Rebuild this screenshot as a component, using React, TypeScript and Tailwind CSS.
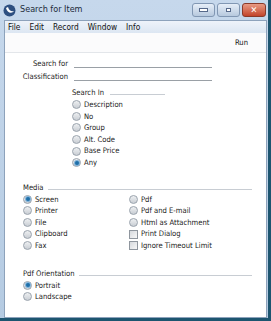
import React from 'react';

const font = { fontFamily: '"DejaVu Sans Condensed", "DejaVu Sans", sans-serif' };

function Radio({ checked }: { checked?: boolean }) {
  return (
    <span className="relative inline-block w-[9px] h-[9px] rounded-full border border-[#9aa3ad] bg-gradient-to-b from-[#eef0f2] to-[#c9ced4] shrink-0">
      {checked && (
        <span className="absolute left-[1.5px] top-[1.5px] w-[4px] h-[4px] rounded-full bg-[#1f6fa8] ring-1 ring-[#7fb3da]" />
      )}
    </span>
  );
}

function Check() {
  return <span className="inline-block w-[9px] h-[9px] border border-[#8f969e] bg-gradient-to-br from-[#d6d9dd] to-[#f7f7f7] shrink-0" />;
}

function Opt({ label, checked, box }: { label: string; checked?: boolean; box?: boolean }) {
  return (
    <div className="flex items-center gap-[3px] h-[11.6px]">
      {box ? <Check /> : <Radio checked={checked} />}
      <span className="text-[7.6px] text-[#1a1a1a] leading-none">{label}</span>
    </div>
  );
}

function Section({ title }: { title: string }) {
  return (
    <div className="flex items-center gap-[4px] h-[12px] pr-[14px]">
      <span className="text-[7.6px] text-[#1a1a1a] leading-none">{title}</span>
      <span className="flex-1 h-px bg-[#c8cdd3] mt-[3px]" />
    </div>
  );
}

export default function App() {
  const menu = ['File', 'Edit', 'Record', 'Window', 'Info'];
  return (
    <div style={font} className="w-[271px] h-[321px] flex flex-col bg-gradient-to-b from-[#c6d8ec] to-[#b5cbe2] border-r-[3px] border-b-[3px] border-[#1d5570] overflow-hidden">
      {/* title bar */}
      <div className="h-[20px] flex items-center pl-[3px] pr-[2px]">
        <svg width="13" height="13" viewBox="0 0 13 13">
          <circle cx="6.5" cy="6.5" r="6" fill="#2d4f80" />
          <path d="M3 4 C 4 9, 9 10, 11 7 C 9 8, 6 7, 5 3 Z" fill="#fff" />
        </svg>
        <span className="ml-[4px] text-[9px] text-[#1c2a3a]">Search for Item</span>
        <div className="ml-auto flex items-center gap-[2px]">
          <div className="w-[23px] h-[14px] rounded-[3px] border border-[#8197b3] bg-gradient-to-b from-[#e6eef8] to-[#b7c9de] flex items-center justify-center">
            <span className="w-[7px] h-[2px] bg-white border border-[#56698a] box-content" />
          </div>
          <div className="w-[23px] h-[14px] rounded-[3px] border border-[#8197b3] bg-gradient-to-b from-[#e6eef8] to-[#b7c9de] flex items-center justify-center">
            <span className="w-[5px] h-[4px] border border-[#56698a] bg-white" />
          </div>
          <div className="w-[24px] h-[14px] rounded-[3px] border border-[#8a3a2a] bg-gradient-to-b from-[#e89a84] to-[#c2432a] flex items-center justify-center text-white text-[9px] font-bold leading-none">
            ✕
          </div>
        </div>
      </div>
      {/* client */}
      <div className="flex-1 ml-[4px] mr-[1px] flex flex-col bg-white border border-[#8da2bb]">
        <div className="h-[12px] flex items-center gap-[9px] pl-[3px] bg-gradient-to-b from-[#eef3fa] to-[#dce6f2]">
          {menu.map((m) => (
            <span key={m} className="text-[8.3px] text-[#111] leading-none">{m}</span>
          ))}
        </div>
        <div className="h-[20px] flex items-center justify-end pr-[18px] border-b border-[#e3e6ea] bg-[#fbfbfc]">
          <span className="text-[7.6px] text-[#111]">Run</span>
        </div>
        <div className="flex-1 flex flex-col pt-[5px]">
          <div className="flex items-center h-[12px]">
            <span className="w-[63px] text-right text-[7.6px] text-[#1a1a1a] leading-none">Search for</span>
            <span className="ml-[6px] w-[138px] h-px bg-[#9aa0a6] mt-[6px]" />
          </div>
          <div className="flex items-center h-[12px] mt-[1px]">
            <span className="w-[63px] text-right text-[7.6px] text-[#1a1a1a] leading-none">Classification</span>
            <span className="ml-[6px] w-[138px] h-px bg-[#9aa0a6] mt-[6px]" />
          </div>
          <div className="ml-[67px] mt-[4px] flex flex-col">
            <div className="flex items-center gap-[6px] h-[12px]">
              <span className="text-[7.6px] text-[#1a1a1a] leading-none">Search In</span>
              <span className="w-[55px] h-px bg-[#c8cdd3] mt-[3px]" />
            </div>
            <Opt label="Description" />
            <Opt label="No" />
            <Opt label="Group" />
            <Opt label="Alt. Code" />
            <Opt label="Base Price" />
            <Opt label="Any" checked />
          </div>
          <div className="ml-[18px] mt-[13px] flex flex-col">
            <Section title="Media" />
            <div className="flex">
              <div className="w-[106px] flex flex-col">
                <Opt label="Screen" checked />
                <Opt label="Printer" />
                <Opt label="File" />
                <Opt label="Clipboard" />
                <Opt label="Fax" />
              </div>
              <div className="flex flex-col">
                <Opt label="Pdf" />
                <Opt label="Pdf and E-mail" />
                <Opt label="Html as Attachment" />
                <Opt label="Print Dialog" box />
                <Opt label="Ignore Timeout Limit" box />
              </div>
            </div>
            <div className="mt-[16px]">
              <Section title="Pdf Orientation" />
            </div>
            <Opt label="Portrait" checked />
            <Opt label="Landscape" />
          </div>
        </div>
      </div>
    </div>
  );
}
